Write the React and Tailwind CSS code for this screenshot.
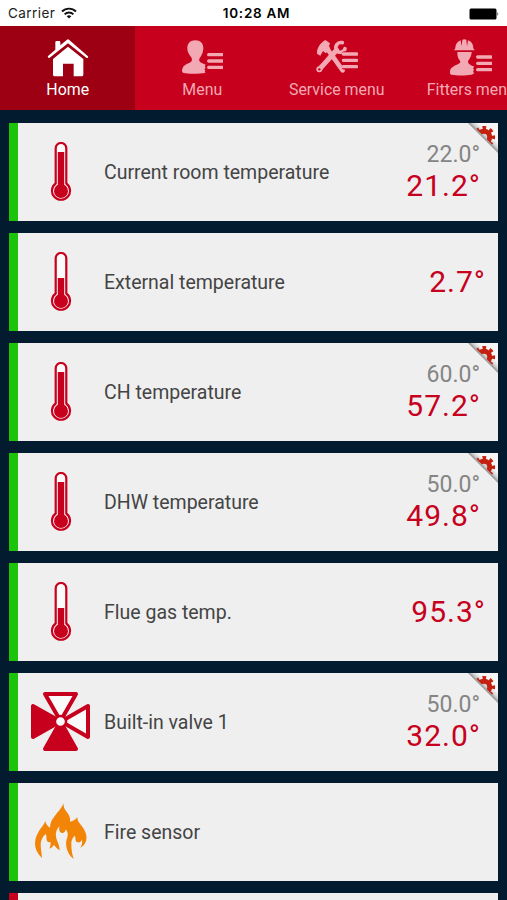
import React from 'react';

const HomeIcon = () => (
  <svg viewBox="0 0 126 120" className="w-[42px] h-[40px]" fill="currentColor">
    <path d="M25 32V10q0-4 4-4h7q4 0 4 4v9L60 2q3-2 6 0l56 49q3 3 1 5t-5 0L63 13 8 56q-3 2-5-1t1-5z" />
    <path d="M63 23 109 60v47q0 5-5 5H80V74H48v38H23q-5 0-5-5V60z" />
  </svg>
);

const MenuLines = ({ x, y }) => (
  <g fill="none" stroke="currentColor" strokeWidth="10" strokeLinecap="round">
    <path d={`M${x} ${y}h40M${x} ${y + 19}h40M${x} ${y + 38}h40`} />
  </g>
);

const UserMenuIcon = () => (
  <svg viewBox="0 0 126 120" className="w-[42px] h-[40px]" fill="currentColor">
    <path d="M43 4c15 0 25 10 24 26-1 13-7 22-12 29-2 7 2 11 9 14l10 4c-3 3-3 6 0 9-4 3-4 6-1 9-2 2-2 4 1 6-17 4-52 4-66 1-5-2-6-7-4-13 3-10 12-14 22-18 7-3 8-8 6-14-5-8-12-14-13-27C18 14 28 4 43 4z" />
    <MenuLines x={83} y={47} />
  </svg>
);

const ToolsMenuIcon = () => (
  <svg viewBox="0 0 126 120" className="w-[42px] h-[40px]">
    <g fill="none" stroke="currentColor" strokeLinecap="round">
      <path d="M32 27 80 94" strokeWidth="14" />
      <path d="M10 91 62 33" strokeWidth="15" />
      <path d="M79 11C64 8 56 22 61 33c6 10 22 9 26-4" strokeWidth="11" />
    </g>
    <path d="M28 3 42 13l-3 8 4 9-14 13-8-7-8 14-10-6C2 28 12 12 28 3z" fill="currentColor" />
    <circle cx="10" cy="91" r="9" fill="currentColor" />
    <circle cx="10" cy="91" r="3.500" fill="#c7001d" />
    <path d="M86 45h40M82 64h44M86 83h40" stroke="#c7001d" strokeWidth="17" strokeLinecap="round" />
    <MenuLines x={82} y={45} />
  </svg>
);

const FitterMenuIcon = () => (
  <svg viewBox="0 0 126 120" className="w-[42px] h-[40px]" fill="currentColor">
    <path d="M16 28C16 15 24 7 32 4l3 18 2-20q6-3 12 0l2 20 3-18c9 3 16 11 16 24l4 6H12z" />
    <path d="M22 39h43c-1 14-6 20-11 27 0 10 5 11 19 17-4 3-4 6-1 9-3 4-3 7 0 10-1 3-4 4-8 5-17 3-43 3-60 0-6-2-6-9-3-15 4-9 16-13 24-17 7-4 7-5 4-11-5-6-7-12-7-25z" />
    <MenuLines x={83} y={54} />
  </svg>
);

const Thermometer = ({ level }) => (
  <svg viewBox="0 0 60 60" className="size-[60px]">
    <path
      d="M24.700 41.500V6.300a5.300 5.300 0 0 1 10.600 0V41.500a9 9 0 1 1-10.600 0z"
      fill="#fafafa"
      stroke="#c7001d"
      strokeWidth="2.200"
    />
    <path d={`M26.800 ${level}h6.400V46h-6.400z`} fill="#c7001d" />
    <circle cx="30" cy="49" r="7" fill="#c7001d" />
  </svg>
);

const Valve = () => (
  <svg viewBox="0 0 60 60" className="size-[60px]" strokeLinejoin="round" stroke="#c7001d" strokeWidth="4">
    <path d="M14 2h31L29.500 29z" fill="#fafafa" />
    <path d="M57 14v31L30 29.500z" fill="#fafafa" />
    <path d="M2 14v31l27.500-15.500z" fill="#c7001d" />
    <path d="M14 57h31L29.500 29.500z" fill="#c7001d" />
    <circle cx="29.500" cy="29.500" r="5.600" fill="#fafafa" strokeWidth="2.500" />
  </svg>
);

const Fire = () => (
  <svg viewBox="93 81 180 180" className="size-[60px]" fill="#f28408">
    <path d="M191 85c-2 16 8 23 15 34 4 7 5 13 4 21 10-2 17-6 22-13 0 14 9 19 17 31 9 13 14 29 8 43-4 9-9 13-16 18 4-8 7-17 5-25-2 5-7 9-13 8-9-2-5-14-9-20-8 7-11 17-10 29 0 14 2 25 7 41-11-8-18-19-21-32-3-12-2-23 2-33 3-9 1-18-5-24-1 7-5 12-12 11-8-2-8-11-7-20-8 9-12 19-10 31 2 13 11 24 11 41-7-4-12-10-17-17-3 6-8 9-14 12 3-7 5-14 3-20-6 2-10-1-11-7-2-6 1-11-3-17-9 8-14 18-15 30 0 16 3 27 4 42-9-8-17-20-20-33-3-17 1-32 11-48 6-10 15-18 19-30 1 9 6 15 14 20 0-11 4-21 10-29 12-17 23-26 31-44z" />
  </svg>
);

const SettingsCorner = () => (
  <svg viewBox="0 0 30 30" className="absolute right-0 top-0 size-[30px]">
    <defs>
      <linearGradient id="fold" gradientUnits="userSpaceOnUse" x1="15" y1="15" x2="20" y2="10">
        <stop offset="0" stopColor="#8d8d8d" />
        <stop offset="0.450" stopColor="#d2d2d2" />
        <stop offset="1" stopColor="#f6f6f6" />
      </linearGradient>
      <clipPath id="fold-clip">
        <path d="M2.500 0H30v27.500z" />
      </clipPath>
    </defs>
    <path d="M0 0h30v30z" fill="url(#fold)" />
    <g clipPath="url(#fold-clip)" fill="none" stroke="#c4200f">
      <circle cx="16" cy="14" r="5.700" strokeWidth="5" />
      <circle cx="16" cy="14" r="9.200" strokeWidth="3.800" strokeDasharray="3.613 3.613" strokeDashoffset="1.800" />
    </g>
  </svg>
);

const TABS = [
  { label: 'Home', icon: HomeIcon, active: true },
  { label: 'Menu', icon: UserMenuIcon },
  { label: 'Service menu', icon: ToolsMenuIcon },
  { label: 'Fitters menu', icon: FitterMenuIcon },
];

const TILES = [
  { label: 'Current room temperature', icon: <Thermometer level={10} />, preset: '22.0°', value: '21.2°' },
  { label: 'External temperature', icon: <Thermometer level={26} />, value: '2.7°' },
  { label: 'CH temperature', icon: <Thermometer level={10} />, preset: '60.0°', value: '57.2°' },
  { label: 'DHW temperature', icon: <Thermometer level={10} />, preset: '50.0°', value: '49.8°' },
  { label: 'Flue gas temp.', icon: <Thermometer level={26} />, value: '95.3°' },
  { label: 'Built-in valve 1', icon: <Valve />, preset: '50.0°', value: '32.0°' },
  { label: 'Fire sensor', icon: <Fire /> },
  { label: '', alarm: true },
];

const StatusBar = () => (
  <div className="grid h-[26px] shrink-0 grid-cols-3 items-center bg-white px-2 pt-px font-['Inter','Liberation_Sans',sans-serif] text-[#222]">
    <div className="flex items-center gap-[6px]">
      <span className="text-[13.500px] tracking-[0.450px]">Carrier</span>
      <svg viewBox="0 0 16 12" className="mb-[2px] h-[12px] w-[16px]" fill="none" stroke="#111" strokeWidth="1.900">
        <path d="M1 4.500a10 10 0 0 1 14 0M3.600 7.300a6.200 6.200 0 0 1 8.800 0" />
        <path d="M8 11.600 5.700 9.300a3.300 3.300 0 0 1 4.600 0z" fill="#111" stroke="none" />
      </svg>
    </div>
    <span className="whitespace-nowrap pl-[6px] text-center text-[13.500px] font-semibold tracking-[0.700px] text-black">10:28 AM</span>
    <svg viewBox="0 0 30 12" className="h-[12px] w-[30px] justify-self-end">
      <rect x="0.500" y="0.500" width="27" height="11" rx="1.500" fill="#000" />
      <path d="M28.500 4q1.500 2 0 4z" fill="#000" />
    </svg>
  </div>
);

const Tile = ({ label, icon, preset, value, alarm }) => (
  <div className={`relative flex h-[98px] shrink-0 items-center border-l-[9px] bg-[#efefef] ${alarm ? 'border-[#c7001d]' : 'border-[#1cc409]'}`}>
    <div className="ml-[13px] size-[60px] shrink-0">{icon}</div>
    <span className="ml-[13px] flex-1 whitespace-nowrap pt-[2px] text-[19.500px] text-[#444]">{label}</span>
    <div className={`flex flex-col items-end ${preset ? 'pr-[18px] pt-px' : 'pr-[12px]'}`}>
      {preset && <span className="text-[23px] leading-[27px] text-[#858585]">{preset}</span>}
      {value && (
        <span className={`text-[30px] leading-[36px] tracking-[1px] text-[#c7001d] ${preset ? '-mr-px' : ''}`}>{value}</span>
      )}
    </div>
    {preset && <SettingsCorner />}
  </div>
);

const App = () => {
  return (
    <div className="flex h-screen flex-col overflow-hidden bg-[#021b2e] font-['Roboto',sans-serif]">
      <StatusBar />

      {/* Tab bar, the last tab runs past the screen edge */}
      <nav className="flex h-[84px] shrink-0 overflow-hidden bg-[#c7001d]">
        {TABS.map(({ label, icon: Icon, active }) => (
          <div
            key={label}
            className={`flex w-[134.500px] shrink-0 flex-col items-center pl-px pt-[13px] ${active ? 'bg-[#9e0013] text-white' : 'text-[#f3a9b3]'}`}
          >
            <Icon />
            <span className="whitespace-nowrap text-[15.900px] leading-[22px]">{label}</span>
          </div>
        ))}
      </nav>

      <main className="flex flex-col gap-[12px] pl-[9px] pr-[9px] pt-[13px]">
        {TILES.map((tile, i) => (
          <Tile key={i} {...tile} />
        ))}
      </main>
    </div>
  );
};

export default App;
